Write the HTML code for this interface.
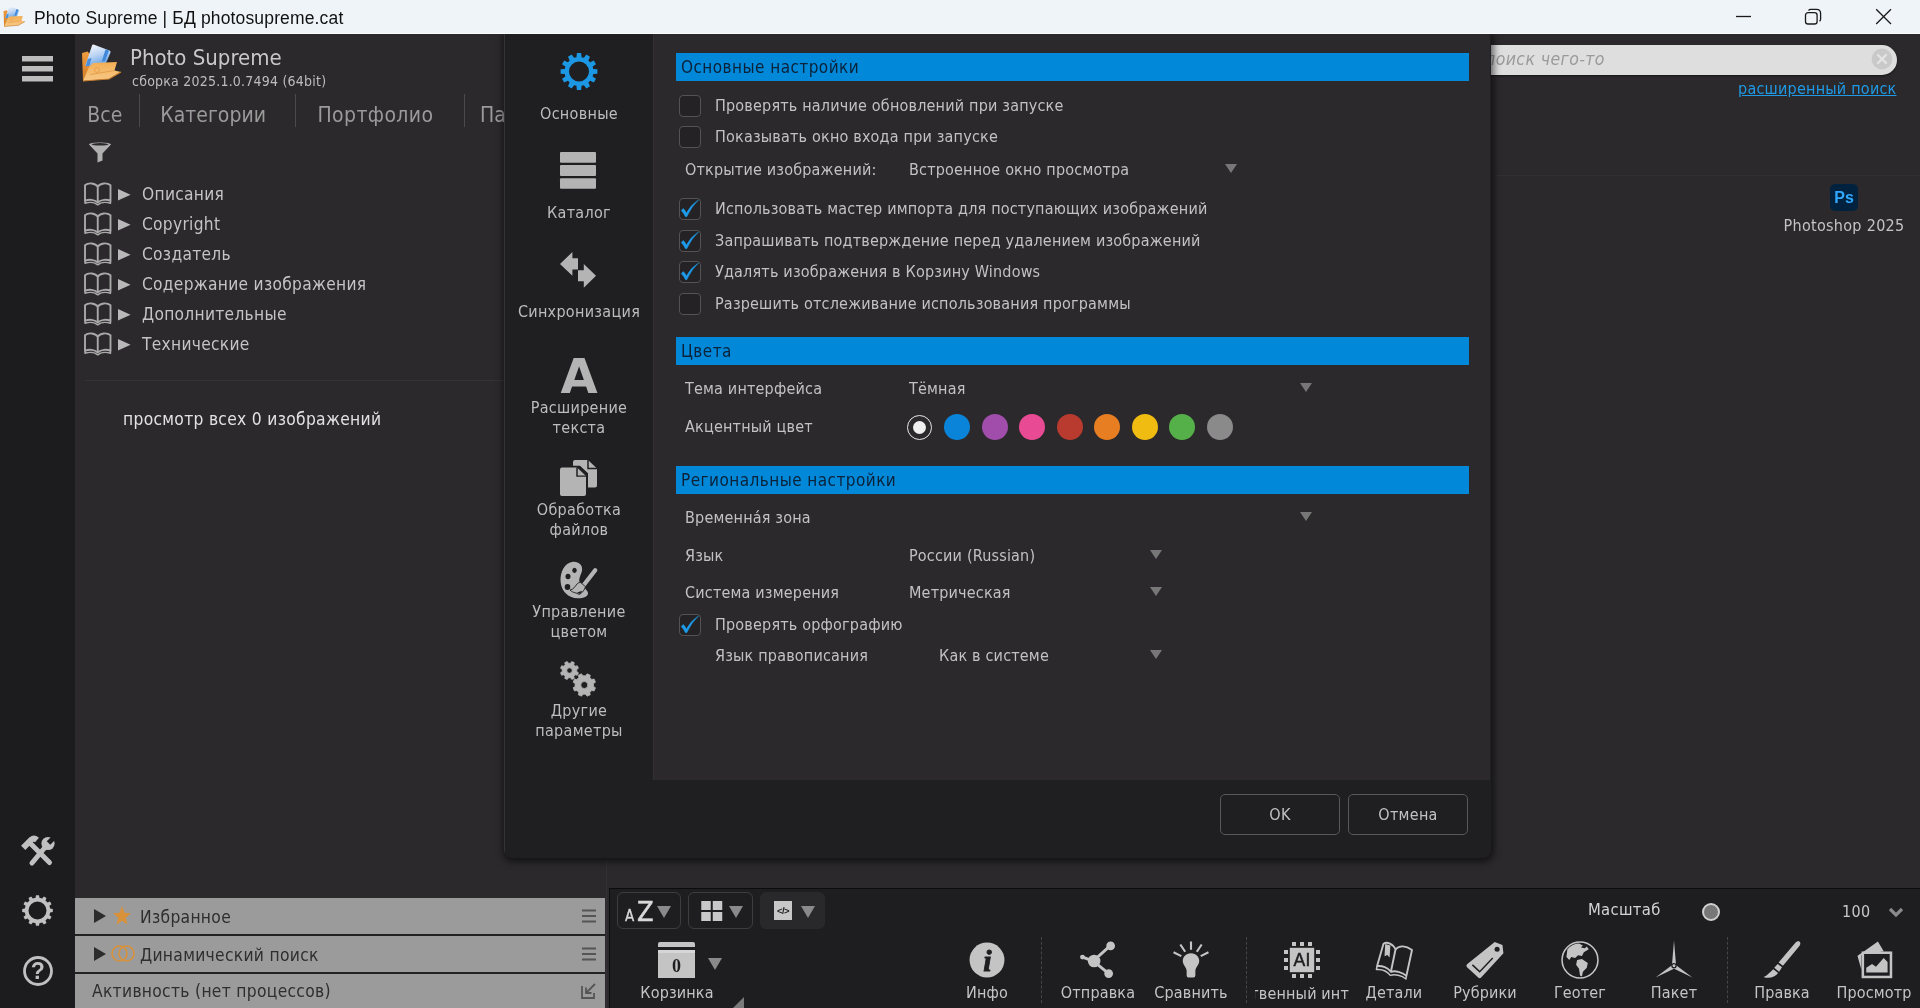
<!DOCTYPE html>
<html lang="ru">
<head>
<meta charset="utf-8">
<title>Photo Supreme | БД photosupreme.cat</title>
<style>
*{box-sizing:border-box;margin:0;padding:0}
html,body{width:1920px;height:1008px;overflow:hidden;background:#2b292b}
body{font-family:"DejaVu Sans Condensed","Liberation Sans",sans-serif;font-size:16px;color:#c4c4c4;letter-spacing:.25px;position:relative}
.abs{position:absolute}
#titlebar,#rail,#left,#right,#toolbar,#dlg{will-change:transform}
.t{position:absolute;white-space:nowrap;line-height:20px}
svg{position:absolute;overflow:visible}
/* title bar */
#titlebar{left:0;top:0;width:1920px;height:34px;background:#eff4f9;border-bottom:1px solid #fafcfe}
#titlebar .cap{left:34px;top:6.7px;font-family:"Liberation Sans",sans-serif;font-size:17.5px;color:#111;letter-spacing:.15px;line-height:22px}
/* rail */
#rail{left:0;top:34px;width:75px;height:974px;background:#1c1b1d}
/* left panel */
#left{left:75px;top:34px;width:530px;height:974px;background:#2b292b}
/* toolbar */
#toolbar{left:609px;top:888px;width:1311px;height:120px;background:#1e1d1f;border-top:1px solid #0c0c0c}
#gap{left:606px;top:858px;width:1px;height:150px;background:#323032}
/* dialog */
#dlg{left:504px;top:34px;width:986.5px;height:823.5px;background:#1f1e20;box-shadow:1px 2px 7px 2px rgba(0,0,0,.55);border-radius:0 0 8px 8px;overflow:hidden}
#dlgin{left:1px;top:0;width:985px;height:823px;box-shadow:-1px 0 0 0 #343234}
#dlgc{left:148px;top:0;width:837px;height:746px;background:#2b292b;border-left:1px solid #323032}
#dlgnav{left:0;top:0;width:148px;height:746px;background:#1f1e20}


#titlebar{z-index:50}
.logo{}
/* left panel content */
#left .h1{left:55px;top:10px;font-size:22px;line-height:28px;color:#c8c8c8;letter-spacing:0}
#left .h2{left:57px;top:37.5px;font-size:14px;line-height:18px;color:#bdbdbd;letter-spacing:.22px}
.tab{position:absolute;top:67px;font-size:21px;line-height:28px;color:#9a9a9a;white-space:nowrap;letter-spacing:0}
.tsep{position:absolute;top:60px;width:1px;height:33px;background:#4a4a4a}
.row{position:absolute;left:0;height:30px;width:430px}
.row .lbl{position:absolute;left:67px;top:6px;line-height:20px;font-size:17.2px;color:#c4c4c4;white-space:nowrap;letter-spacing:.3px}
.row .tri{position:absolute;left:43px;top:10.5px;width:0;height:0;border-left:12.5px solid #b6b6b6;border-top:5.8px solid transparent;border-bottom:5.8px solid transparent}
.bar{position:absolute;left:0;width:530px;height:36px;background:#9b9b9b;color:#2a2a2a}
.bar .lbl{position:absolute;top:9px;line-height:20px;font-size:17.3px;color:#2e2e2e;white-space:nowrap;letter-spacing:.3px}

/* dialog content */
.nl{position:absolute;left:0;margin-top:1px;width:148px;text-align:center;font-size:16px;line-height:20px;color:#bdbdbd;letter-spacing:.3px;white-space:nowrap}
.sh{position:absolute;left:171px;width:793px;height:27.5px;background:#0288d9;color:#0b2239;font-size:17px;line-height:29px;padding-left:5px;letter-spacing:.45px;white-space:nowrap}
.cb{position:absolute;left:174px;margin-top:.6px;width:22px;height:22px;border:1px solid #535353;border-radius:4px;background:#242224}
.cb svg{left:-1px;top:-2px}
.dl{position:absolute;font-size:16px;line-height:20px;color:#c2c2c2;white-space:nowrap;letter-spacing:.19px;margin-top:1px}
.dd{position:absolute;width:0;height:0;border-top:9px solid #777;border-left:6px solid transparent;border-right:6px solid transparent}
.dot{position:absolute;top:379.5px;width:26px;height:26px;border-radius:50%}
.btn{position:absolute;top:760px;width:120px;height:41px;border:1px solid #585858;border-radius:5px;text-align:center;line-height:39px;font-size:16px;color:#c2c2c2;letter-spacing:.3px}

.btn{z-index:2}
/* right */
#right{left:1490px;top:34px;width:430px;height:854px}
#search{left:-4px;top:11px;width:411px;height:30px;border-radius:0 16px 16px 0;background:#dedede;box-shadow:0 1px 2px rgba(0,0,0,.5)}
/* toolbar */
.tb{position:absolute;top:3px;height:37px;border-radius:6px;border:1px solid #3d3c3e}
.tl{position:absolute;top:94.3px;font-size:16px;line-height:20px;color:#c4c4c4;white-space:nowrap;letter-spacing:.15px;transform:translateX(-50%)}
.vsep{position:absolute;top:48px;width:0;height:66px;border-left:1.5px dashed #454446}
.dd2{position:absolute;width:0;height:0;border-top:12px solid #8a8a8a;border-left:7px solid transparent;border-right:7px solid transparent}
</style>
</head>
<body>
<div id="titlebar" class="abs">
  <div class="t cap">Photo Supreme | БД photosupreme.cat</div>
<svg style="left:3px;top:6px" width="22" height="21" viewBox="0 0 40 38">
    <defs><linearGradient id="tgf" x1="0" y1="0" x2="0" y2="1"><stop offset="0" stop-color="#f3ae55"/><stop offset="1" stop-color="#f7c987"/></linearGradient>
    <linearGradient id="tgb" x1=".2" y1="0" x2=".6" y2="1"><stop offset="0" stop-color="#f6f8fd"/><stop offset=".5" stop-color="#b9d3f3"/><stop offset="1" stop-color="#5b9de3"/></linearGradient>
    <linearGradient id="tgk" x1="0" y1="0" x2="0" y2="1"><stop offset="0" stop-color="#ef9a3d"/><stop offset="1" stop-color="#d07f2a"/></linearGradient></defs>
    <path d="M1 9L6.5 7.5L9 10L15 9L13 30L2 37Z" fill="url(#tgk)"/>
    <path d="M12.5 .5Q11.5 .3 11 1.5L4.5 21Q4.2 22.5 5.5 22.300L24 19.5Q25 19.3 25.5 18L29.5 8.5Q30 7 28.5 6.5Z" fill="url(#tgb)"/>
    <path d="M24.5 5.300L28 6.5L24 17L20.8 17.5Z" fill="#3f88da"/>
    <path d="M6.8 15L10.5 14L8.5 21.800L4.8 22.300Z" fill="#4a8fdc"/>
    <path d="M12 19L36 18L33.5 26.5L40 28L28 35L2 37L8 23Z" fill="url(#tgf)"/>
    <path d="M9.5 30.5L33.5 26.5" stroke="#e09a45" stroke-width=".8" fill="none"/>
    <path d="M2 37L28 35L40 28" fill="none" stroke="#c67c2b" stroke-width="1.2"/>
    <circle cx="16" cy="26" r="2.5" fill="none" stroke="#e39b48" stroke-width=".8"/>
  </svg>
  <svg style="left:1736px;top:9px" width="156" height="16" viewBox="0 0 156 16" fill="none" stroke="#1a1a1a" stroke-width="1.3"><path d="M0 7.5H15"/><rect x="69.5" y="3.7" width="11.6" height="11.3" rx="2.6"/><path d="M72.5 1.5Q73 .4 75 .4H80.5Q84.6 .4 84.6 4.5V10Q84.6 11.7 83.5 12.3"/><path d="M140.2 .2L155 15M155 .2L140.2 15"/></svg>
</div>
<div id="rail" class="abs">
  <svg style="left:22px;top:22px" width="31" height="26" viewBox="0 0 31 26" fill="#bcbcbc"><rect y="0" width="31" height="5.5"/><rect y="10" width="31" height="5.5"/><rect y="20" width="31" height="5.5"/></svg>
  <svg style="left:21px;top:802px" width="34" height="30" viewBox="0 0 34 30" fill="none" stroke="#c0c0c0"><path d="M11 27L23.5 12" stroke-width="5" stroke-linecap="round"/><circle cx="27" cy="7.5" r="6.6" fill="#c0c0c0" stroke="none"/><path d="M27.5 7L34 .5" stroke="#1c1b1d" stroke-width="5"/><path d="M10 8L28.5 26.5" stroke-width="5" stroke-linecap="round"/><path d="M2.2 11.800L10.5 3.5Q13 1.5 16 4" stroke-width="6"/></svg>
  <svg style="left:22px;top:861px" width="31" height="31" viewBox="0 0 31 31"><path d="M13.56 2.85L13.97 0.18L17.03 0.18L17.44 2.85L20.15 3.57L21.84 1.46L24.49 2.99L23.50 5.51L25.49 7.50L28.01 6.51L29.54 9.16L27.43 10.85L28.15 13.56L30.82 13.97L30.82 17.03L28.15 17.44L27.43 20.15L29.54 21.84L28.01 24.49L25.49 23.50L23.50 25.49L24.49 28.01L21.84 29.54L20.15 27.43L17.44 28.15L17.03 30.82L13.97 30.82L13.56 28.15L10.85 27.43L9.16 29.54L6.51 28.01L7.50 25.49L5.51 23.50L2.99 24.49L1.46 21.84L3.57 20.15L2.85 17.44L0.18 17.03L0.18 13.97L2.85 13.56L3.57 10.85L1.46 9.16L2.99 6.51L5.51 7.50L7.50 5.51L6.51 2.99L9.16 1.46L10.85 3.57ZM24.50 15.50A9 9 0 1 0 6.50 15.50A9 9 0 1 0 24.50 15.50Z" fill="#c0c0c0" fill-rule="evenodd"/></svg>
  <svg style="left:22.5px;top:921.5px" width="30" height="30" viewBox="0 0 30 30"><circle cx="15" cy="15" r="13.5" fill="none" stroke="#c0c0c0" stroke-width="2.8"/><text x="15" y="23.2" text-anchor="middle" font-family="Liberation Sans,sans-serif" font-weight="bold" font-size="23" fill="#c0c0c0">?</text></svg>
</div>
<div id="left" class="abs">
  <svg style="left:6px;top:10px" width="40" height="38" viewBox="0 0 40 38">
    <defs><linearGradient id="lgf" x1="0" y1="0" x2="0" y2="1"><stop offset="0" stop-color="#f3ae55"/><stop offset="1" stop-color="#f7c987"/></linearGradient>
    <linearGradient id="lgb" x1=".2" y1="0" x2=".6" y2="1"><stop offset="0" stop-color="#f6f8fd"/><stop offset=".5" stop-color="#b9d3f3"/><stop offset="1" stop-color="#5b9de3"/></linearGradient>
    <linearGradient id="lgk" x1="0" y1="0" x2="0" y2="1"><stop offset="0" stop-color="#ef9a3d"/><stop offset="1" stop-color="#d07f2a"/></linearGradient></defs>
    <path d="M1 9L6.5 7.5L9 10L15 9L13 30L2 37Z" fill="url(#lgk)"/>
    <path d="M12.5 .5Q11.5 .3 11 1.5L4.5 21Q4.2 22.5 5.5 22.300L24 19.5Q25 19.3 25.5 18L29.5 8.5Q30 7 28.5 6.5Z" fill="url(#lgb)"/>
    <path d="M24.5 5.300L28 6.5L24 17L20.8 17.5Z" fill="#3f88da"/>
    <path d="M6.8 15L10.5 14L8.5 21.800L4.8 22.300Z" fill="#4a8fdc"/>
    <path d="M12 19L36 18L33.5 26.5L40 28L28 35L2 37L8 23Z" fill="url(#lgf)"/>
    <path d="M9.5 30.5L33.5 26.5" stroke="#e09a45" stroke-width=".8" fill="none"/>
    <path d="M2 37L28 35L40 28" fill="none" stroke="#c67c2b" stroke-width="1.2"/>
    <circle cx="16" cy="26" r="2.5" fill="none" stroke="#e39b48" stroke-width=".8"/>
  </svg>
  <div class="t h1">Photo Supreme</div>
  <div class="t h2">сборка 2025.1.0.7494 (64bit)</div>
  <div class="tab" style="left:12.3px">Все</div><div class="tsep" style="left:64px"></div>
  <div class="tab" style="left:85.3px">Категории</div><div class="tsep" style="left:220px"></div>
  <div class="tab" style="left:242.5px;letter-spacing:.4px">Портфолио</div><div class="tsep" style="left:389px"></div>
  <div class="tab" style="left:405px">Па</div>
  <svg style="left:13px;top:107px" width="24" height="22" viewBox="0 0 24 22"><path d="M1 3.5C1 .8 23 .8 23 3.5L14.5 12.5V19.5L9.5 21.5V12.5Z" fill="#b0b0b0"/><ellipse cx="12" cy="3.3" rx="8.5" ry="1.3" fill="#2b292b"/></svg>
  <div class="row" style="top:144px"><svg class="bk" style="left:8.800px;top:4.300px" width="27.5" height="23.5" viewBox="0 0 27.5 23.5" fill="none" stroke="#a9a9a9" stroke-width="1.9" stroke-linejoin="round"><path d="M13.75 4.700C11.5 1 4.5 .3 1 3.200V18.800C5 17 10.5 17.4 13.75 20.600C17 17.4 22.5 17 26.5 18.800V3.200C23 .3 16 1 13.75 4.700ZM13.75 4.700V20.4"/><path d="M1 18.800V21.300C5 19.8 10.5 20.1 13.75 22.800C17 20.1 22.5 19.8 26.5 21.300V18.8" stroke-width="1.5"/></svg><svg style="left:43px;top:10.8px" width="13" height="12" viewBox="0 0 13 12"><path d="M0 0L12.6 5.75L0 11.5Z" fill="#b8b8b8"/></svg><span class="lbl">Описания</span></div>
<div class="row" style="top:174px"><svg class="bk" style="left:8.800px;top:4.300px" width="27.5" height="23.5" viewBox="0 0 27.5 23.5" fill="none" stroke="#a9a9a9" stroke-width="1.9" stroke-linejoin="round"><path d="M13.75 4.700C11.5 1 4.5 .3 1 3.200V18.800C5 17 10.5 17.4 13.75 20.600C17 17.4 22.5 17 26.5 18.800V3.200C23 .3 16 1 13.75 4.700ZM13.75 4.700V20.4"/><path d="M1 18.800V21.300C5 19.8 10.5 20.1 13.75 22.800C17 20.1 22.5 19.8 26.5 21.300V18.8" stroke-width="1.5"/></svg><svg style="left:43px;top:10.8px" width="13" height="12" viewBox="0 0 13 12"><path d="M0 0L12.6 5.75L0 11.5Z" fill="#b8b8b8"/></svg><span class="lbl">Copyright</span></div>
<div class="row" style="top:204px"><svg class="bk" style="left:8.800px;top:4.300px" width="27.5" height="23.5" viewBox="0 0 27.5 23.5" fill="none" stroke="#a9a9a9" stroke-width="1.9" stroke-linejoin="round"><path d="M13.75 4.700C11.5 1 4.5 .3 1 3.200V18.800C5 17 10.5 17.4 13.75 20.600C17 17.4 22.5 17 26.5 18.800V3.200C23 .3 16 1 13.75 4.700ZM13.75 4.700V20.4"/><path d="M1 18.800V21.300C5 19.8 10.5 20.1 13.75 22.800C17 20.1 22.5 19.8 26.5 21.300V18.8" stroke-width="1.5"/></svg><svg style="left:43px;top:10.8px" width="13" height="12" viewBox="0 0 13 12"><path d="M0 0L12.6 5.75L0 11.5Z" fill="#b8b8b8"/></svg><span class="lbl">Создатель</span></div>
<div class="row" style="top:234px"><svg class="bk" style="left:8.800px;top:4.300px" width="27.5" height="23.5" viewBox="0 0 27.5 23.5" fill="none" stroke="#a9a9a9" stroke-width="1.9" stroke-linejoin="round"><path d="M13.75 4.700C11.5 1 4.5 .3 1 3.200V18.800C5 17 10.5 17.4 13.75 20.600C17 17.4 22.5 17 26.5 18.800V3.200C23 .3 16 1 13.75 4.700ZM13.75 4.700V20.4"/><path d="M1 18.800V21.300C5 19.8 10.5 20.1 13.75 22.800C17 20.1 22.5 19.8 26.5 21.300V18.8" stroke-width="1.5"/></svg><svg style="left:43px;top:10.8px" width="13" height="12" viewBox="0 0 13 12"><path d="M0 0L12.6 5.75L0 11.5Z" fill="#b8b8b8"/></svg><span class="lbl">Содержание изображения</span></div>
<div class="row" style="top:264px"><svg class="bk" style="left:8.800px;top:4.300px" width="27.5" height="23.5" viewBox="0 0 27.5 23.5" fill="none" stroke="#a9a9a9" stroke-width="1.9" stroke-linejoin="round"><path d="M13.75 4.700C11.5 1 4.5 .3 1 3.200V18.800C5 17 10.5 17.4 13.75 20.600C17 17.4 22.5 17 26.5 18.800V3.200C23 .3 16 1 13.75 4.700ZM13.75 4.700V20.4"/><path d="M1 18.800V21.300C5 19.8 10.5 20.1 13.75 22.800C17 20.1 22.5 19.8 26.5 21.300V18.8" stroke-width="1.5"/></svg><svg style="left:43px;top:10.8px" width="13" height="12" viewBox="0 0 13 12"><path d="M0 0L12.6 5.75L0 11.5Z" fill="#b8b8b8"/></svg><span class="lbl">Дополнительные</span></div>
<div class="row" style="top:294px"><svg class="bk" style="left:8.800px;top:4.300px" width="27.5" height="23.5" viewBox="0 0 27.5 23.5" fill="none" stroke="#a9a9a9" stroke-width="1.9" stroke-linejoin="round"><path d="M13.75 4.700C11.5 1 4.5 .3 1 3.200V18.800C5 17 10.5 17.4 13.75 20.600C17 17.4 22.5 17 26.5 18.800V3.200C23 .3 16 1 13.75 4.700ZM13.75 4.700V20.4"/><path d="M1 18.800V21.300C5 19.8 10.5 20.1 13.75 22.800C17 20.1 22.5 19.8 26.5 21.300V18.8" stroke-width="1.5"/></svg><svg style="left:43px;top:10.8px" width="13" height="12" viewBox="0 0 13 12"><path d="M0 0L12.6 5.75L0 11.5Z" fill="#b8b8b8"/></svg><span class="lbl">Технические</span></div>

  <div class="abs" style="left:10px;top:346px;width:520px;height:1px;background:#353335"></div>
  <div class="t" style="left:48px;top:375px;font-size:17.3px;color:#e2e2e2;letter-spacing:.3px">просмотр всех 0 изображений</div>
  <div class="bar" style="top:864px"><span class="abs" style="left:19px;top:11px;width:0;height:0;border-left:12px solid #2c2c2c;border-top:7px solid transparent;border-bottom:7px solid transparent"></span>
    <svg style="left:37.5px;top:7.5px" width="18" height="19" viewBox="0 0 21 20" preserveAspectRatio="none"><path d="M10.5 0L13.3 7L20.8 7.5L15 12.300L16.9 19.600L10.5 15.5L4.1 19.600L6 12.300L.2 7.5L7.7 7Z" fill="#d9923a"/></svg>
    <span class="lbl" style="left:65px">Избранное</span>
    <svg style="left:507px;top:11px" width="14" height="14" viewBox="0 0 14 14"><path d="M0 1.5H14M0 7H14M0 12.5H14" stroke="#555" stroke-width="2"/></svg></div>
  <div class="bar" style="top:902px"><span class="abs" style="left:19px;top:11px;width:0;height:0;border-left:12px solid #2c2c2c;border-top:7px solid transparent;border-bottom:7px solid transparent"></span>
    <svg style="left:36px;top:9px" width="24" height="17" viewBox="0 0 24 17" fill="none" stroke="#d9923a" stroke-width="1.6"><circle cx="8.5" cy="8.5" r="7.5"/><circle cx="15.5" cy="8.5" r="7.5"/></svg>
    <span class="lbl" style="left:65px">Динамический поиск</span>
    <svg style="left:507px;top:11px" width="14" height="14" viewBox="0 0 14 14"><path d="M0 1.5H14M0 7H14M0 12.5H14" stroke="#555" stroke-width="2"/></svg></div>
  <div class="bar" style="top:940px;height:34px"><span class="lbl" style="left:17px;top:7px">Активность (нет процессов)</span>
    <svg style="left:506px;top:9px" width="16" height="16" viewBox="0 0 16 16" fill="none" stroke="#555" stroke-width="1.8"><path d="M1 3V15H13V10"/><path d="M14 1L6 9M5 4.5V10H10.5"/></svg></div>
  <div class="abs" style="left:0;top:900px;width:530px;height:2px;background:#222"></div>
  <div class="abs" style="left:0;top:938px;width:530px;height:2px;background:#222"></div>
</div>
<div id="right" class="abs">
  <div id="search" class="abs"><div class="t" style="left:-1px;top:4px;font-style:italic;font-size:17.5px;color:#9a9a9a;letter-spacing:.4px">поиск чего-то</div>
    <svg style="left:384px;top:2px" width="24" height="24" viewBox="0 0 24 24"><circle cx="12" cy="12" r="10.4" fill="#c9c9c9"/><path d="M8 8L16 16M16 8L8 16" stroke="#e4e4e4" stroke-width="2.3" stroke-linecap="round"/></svg></div>
  <div class="t" style="right:23.5px;top:45px;font-size:16px;color:#1f9ae6;text-decoration:underline;letter-spacing:.22px">расширенный поиск</div>
  <div class="abs" style="left:6px;top:141px;width:424px;height:1px;background:#323032"></div>
  <div class="abs" style="left:340px;top:149.6px;width:28px;height:27px;border-radius:5px;background:#00223f;color:#31a8ff;font-family:'Liberation Sans',sans-serif;font-weight:bold;font-size:16px;line-height:27px;text-align:center;letter-spacing:0">Ps</div>
  <div class="t" style="left:354px;top:181.5px;transform:translateX(-50%);font-size:16px;color:#c4c4c4;letter-spacing:.3px">Photoshop 2025</div>
</div>
<div id="gap" class="abs"></div>
<div id="toolbar" class="abs">
<div class="abs" style="left:0;top:0;width:1px;height:120px;background:#0e0e0e"></div>
<div class="tb" style="left:8px;width:64px"><span class="abs" style="left:7px;top:14px;font-size:15px;line-height:18px;color:#d8d8d8;letter-spacing:0;-webkit-text-stroke:.3px #d8d8d8">A</span><span class="abs" style="left:19px;top:1px;font-size:27px;line-height:36px;color:#d8d8d8;letter-spacing:0;-webkit-text-stroke:.5px #d8d8d8">Z</span><span class="dd2" style="left:39px;top:13px"></span></div>
<div class="tb" style="left:79px;width:65px"><svg style="left:11.5px;top:8px" width="21.5" height="20" viewBox="0 0 21 20" fill="#c8c8c8"><rect width="9.5" height="9"/><rect x="11.5" width="9.5" height="9"/><rect y="11" width="9.5" height="9"/><rect x="11.5" y="11" width="9.5" height="9"/></svg><span class="dd2" style="left:40px;top:13px"></span></div>
<div class="tb" style="left:151px;width:65px;border-color:#29282a;background:#29282a"><div class="abs" style="left:13px;top:8px;width:18px;height:19px;background:#c8c8c8;color:#222;font-family:'Liberation Sans',sans-serif;font-weight:bold;font-size:9.5px;line-height:19px;text-align:center;letter-spacing:-.5px">&lt;/&gt;</div><span class="dd2" style="left:40px;top:13px"></span></div>
<div class="abs" style="left:49px;top:53px;width:37px;height:5px;border-radius:2px 2px 0 0;background:#c4c4c4"></div>
<div class="abs" style="left:49px;top:61px;width:37px;height:28px;background:#c4c4c4;border-top:3px solid #d6d6d6;color:#1e1d1f;font-family:'Liberation Serif',serif;font-weight:bold;font-size:18px;line-height:26px;text-align:center;letter-spacing:0">0</div>
<span class="dd2" style="left:99px;top:69px"></span>
<div class="tl" style="left:68px">Корзинка</div>
<div class="abs" style="left:124px;top:108px;width:0;height:0;border-bottom:11px solid #7a7a7a;border-left:11px solid transparent"></div>
<div class="abs" style="left:358px;top:51px;width:40px;height:40px;transform:scale(.97)"><svg width="40" height="40" viewBox="0 0 40 40"><circle cx="20" cy="20" r="18" fill="#c4c4c4"/><text x="20.5" y="31" text-anchor="middle" font-family="Liberation Serif,serif" font-style="italic" font-weight="bold" font-size="31" fill="#1e1d1f" stroke="#1e1d1f" stroke-width=".9">i</text></svg></div><div class="tl" style="left:378px">Инфо</div>
<div class="vsep" style="left:432px"></div>
<div class="abs" style="left:469px;top:51px;width:40px;height:40px;transform:scale(.97)"><svg width="40" height="40" viewBox="0 0 40 40" fill="#c4c4c4" stroke="#c4c4c4"><path d="M4 17L15 21L33 5M15 21L31 34" fill="none" stroke-width="3"/><circle cx="16" cy="21" r="6.5" stroke="none"/><circle cx="33" cy="5.5" r="4.5" stroke="none"/><circle cx="31" cy="34" r="4.5" stroke="none"/><circle cx="4" cy="17" r="2.5" stroke="none"/></svg></div><div class="tl" style="left:489px">Отправка</div>
<div class="abs" style="left:562px;top:51px;width:40px;height:40px;transform:scale(.97)"><svg width="40" height="40" viewBox="0 0 40 40" fill="#c4c4c4"><path d="M20 13C14.5 13 11.5 17 11.5 21C11.5 25 15 27 15.5 31V36Q15.5 38 17.5 38H22.5Q24.5 38 24.5 36V31C25 27 28.5 25 28.5 21C28.5 17 25.5 13 20 13Z"/><path d="M20 1V9.5M9 4L14 11.5M31 4L26 11.5M2 12L10 16M38 12L30 16" stroke="#c4c4c4" stroke-width="2.2" fill="none"/></svg></div><div class="tl" style="left:582px">Сравнить</div>
<div class="vsep" style="left:637px"></div>
<div class="abs" style="left:672px;top:51.5px;width:40px;height:40px"><svg style="left:3px;top:1px" width="36" height="36" viewBox="0 0 36 36" fill="#c4c4c4"><rect x="8" y="0" width="4" height="4"/><rect x="8" y="32" width="4" height="4"/><rect x="0" y="8" width="4" height="4"/><rect x="32" y="8" width="4" height="4"/><rect x="16" y="0" width="4" height="4"/><rect x="16" y="32" width="4" height="4"/><rect x="0" y="16" width="4" height="4"/><rect x="32" y="16" width="4" height="4"/><rect x="24" y="0" width="4" height="4"/><rect x="24" y="32" width="4" height="4"/><rect x="0" y="24" width="4" height="4"/><rect x="32" y="24" width="4" height="4"/><rect x="5.8" y="5.8" width="24.4" height="24.4"/><text x="18" y="24.3" text-anchor="middle" font-family="Liberation Sans,sans-serif" font-size="17.5" fill="#1e1d1f" stroke="#1e1d1f" stroke-width=".5">AI</text></svg></div><div class="abs" style="left:646px;top:95px;width:93.5px;height:22px;overflow:hidden"><div class="tl" id="ailbl" style="top:0;left:0;transform:translateX(-57.3px)">Искусственный интеллект</div></div>
<div class="abs" style="left:765px;top:51.5px;width:40px;height:40px"><svg style="left:1.5px;top:1.5px" width="38" height="38" viewBox="0 0 38 38" fill="none" stroke="#c4c4c4" stroke-width="1.9" stroke-linejoin="round"><path d="M7.5 1.700C11 -.5 17 1.5 19.5 7.5L14.9 29.800C12 25.5 6 23.5 1.1 24.100Z"/><path d="M19.5 7.5C23 3 30 3.5 36 8L30.4 33.800C26 30 19 28.5 14.9 29.8"/><path d="M1.1 24.100L.4 27.5C5.5 27 11 29 14.3 33.400C19 32 25.5 33.2 30 37L30.4 33.8" stroke-width="1.5"/><path d="M9.2 2L14.4 3.600L13.6 15.5L11.3 13L8.5 14.200Z" fill="#c4c4c4" stroke="none"/></svg></div><div class="tl" style="left:785px">Детали</div>
<div class="abs" style="left:856px;top:51px;width:40px;height:40px;transform:scale(.97)"><svg width="40" height="40" viewBox="0 0 40 40"><path d="M30 1.5L38 4.5L39 13L16 38Q14.5 39.5 13 38L1.5 27.5Q0 26 1.5 24.5Z" fill="#c4c4c4"/><circle cx="32.5" cy="9" r="2.6" fill="#1e1d1f"/><path d="M7 25L14.5 32L28 18" fill="none" stroke="#1e1d1f" stroke-width="1.5"/></svg></div><div class="tl" style="left:876px">Рубрики</div>
<div class="abs" style="left:951px;top:51px;width:40px;height:40px;transform:scale(.97)"><svg width="40" height="40" viewBox="0 0 40 40"><circle cx="20" cy="20" r="18.5" fill="none" stroke="#c4c4c4" stroke-width="1.6"/><path d="M7 9C10 5 15 3 19 3L23 5L21 7L25 8L27 6L29 9L24 12L22 16L18 15L15 18L11 17L9 20L6 17Z" fill="#c4c4c4"/><path d="M17 20L22 19L28 23L27 28L23 32L22 37L20 36L19 29L16 25Z" fill="#c4c4c4"/></svg></div><div class="tl" style="left:971px">Геотег</div>
<div class="abs" style="left:1045px;top:51px;width:40px;height:40px;transform:scale(.97)"><svg width="40" height="40" viewBox="0 0 40 40" fill="#c4c4c4"><path d="M20 0L22 24H18Z"/><path d="M1 38L18.5 25L21 28.5Z"/><path d="M39 38L21.5 25L19 28.5Z"/><circle cx="20" cy="26" r="2.8" fill="#1e1d1f"/><circle cx="20" cy="26" r="1.5"/></svg></div><div class="tl" style="left:1065px">Пакет</div>
<div class="vsep" style="left:1118px"></div>
<div class="abs" style="left:1153px;top:51px;width:40px;height:40px;transform:scale(.97)"><svg width="40" height="40" viewBox="0 0 40 40" fill="#c4c4c4"><path d="M38 1C39.5 2 39 4 38 5.5L21 26L16.5 22.5L34 2C35.5 .5 37 .3 38 1Z"/><path d="M15.5 24L20 27.5L17 32L12 28Z"/><path d="M11 29.5L16 33.5C13 38 6 39.5 1 37.5C5 36 7 33 11 29.5Z"/></svg></div><div class="tl" style="left:1173px">Правка</div>
<div class="abs" style="left:1245px;top:51px;width:40px;height:40px;transform:scale(.97)"><svg width="40" height="40" viewBox="0 0 40 40"><path d="M3 16L24 1L30 11" fill="#c4c4c4"/><path d="M3 16L7 30V13Z" fill="#c4c4c4"/><rect x="8.5" y="12.5" width="29" height="25" fill="#1e1d1f" stroke="#c4c4c4" stroke-width="2.6"/><path d="M12 33V28L18 24L22 27L30 18L34 22V33Z" fill="#c4c4c4"/></svg></div><div class="tl" style="left:1265px">Просмотр</div>
<div class="t" style="left:979px;top:11px;font-size:16.5px;color:#d4d4d4;letter-spacing:.3px">Масштаб</div>
<div class="abs" style="left:1093px;top:14px;width:18px;height:18px;border-radius:50%;background:#777;border:2.2px solid #cfcfcf"></div>
<div class="t" style="left:1233px;top:13px;font-size:16px;color:#c8c8c8;letter-spacing:.3px">100</div>
<svg style="left:1279px;top:18px" width="16" height="11" viewBox="0 0 16 11"><path d="M2 2L8 8L14 2" fill="none" stroke="#8a8a8a" stroke-width="3.2"/></svg>
</div>
<div id="dlg" class="abs"><div id="dlgin" class="abs">
  <div id="dlgc" class="abs"></div>
  <div id="dlgnav" class="abs">
<svg style="left:54px;top:18px" width="40" height="40" viewBox="0 0 40 40"><path d="M17.43 5.23L17.87 1.12L22.13 1.12L22.57 5.23L24.91 5.86L27.35 2.52L31.03 4.65L29.36 8.42L31.08 10.14L34.85 8.47L36.98 12.15L33.64 14.59L34.27 16.93L38.38 17.37L38.38 21.63L34.27 22.07L33.64 24.41L36.98 26.85L34.85 30.53L31.08 28.86L29.36 30.58L31.03 34.35L27.35 36.48L24.91 33.14L22.57 33.77L22.13 37.88L17.87 37.88L17.43 33.77L15.09 33.14L12.65 36.48L8.97 34.35L10.64 30.58L8.92 28.86L5.15 30.53L3.02 26.85L6.36 24.41L5.73 22.07L1.62 21.63L1.62 17.37L5.73 16.93L6.36 14.59L3.02 12.15L5.15 8.47L8.92 10.14L10.64 8.42L8.97 4.65L12.65 2.52L15.09 5.86ZM30.00 19.50A10 10 0 1 0 10.00 19.50A10 10 0 1 0 30.00 19.50Z" fill="#1c97e3" fill-rule="evenodd"/></svg>
<div class="nl" style="top:69px">Основные</div>
<svg style="left:55px;top:118px" width="36" height="37" viewBox="0 0 36 37" fill="#b4b4b4"><rect x="0" y="0" width="36" height="10.8" rx="1"/><rect x="0" y="13.1" width="36" height="10.8" rx="1"/><rect x="0" y="26.2" width="36" height="10.5" rx="1"/></svg>
<div class="nl" style="top:168px">Каталог</div>
<svg style="left:55px;top:218px" width="36" height="36" viewBox="0 0 36 36" fill="#b4b4b4"><path d="M0 11.900L12.4 0V6.300H18V17.5H12.400V23.800Z"/><path d="M36 23.800L23.8 11.900V18.200H18V29.300H23.800V35.700Z"/></svg>
<div class="nl" style="top:267px">Синхронизация</div>
<div class="abs" style="left:0;top:317px;width:148px;text-align:center;font-family:'DejaVu Sans','Liberation Sans',sans-serif;font-weight:bold;font-size:48px;line-height:50px;color:#b4b4b4;letter-spacing:0">A</div>
<div class="nl" style="top:363px">Расширение</div>
<div class="nl" style="top:383px">текста</div>
<svg style="left:55px;top:426px" width="38" height="36" viewBox="0 0 38 38" preserveAspectRatio="none" fill="#b4b4b4"><path d="M13 0H28L37 9V27Q37 29 35 29H28V14L20 6H13V2Q13 0 15 0Z"/><path d="M28 0V9H37" fill="none" stroke="#1f1e20" stroke-width="1.5"/><path d="M2 8H17L26 17V36Q26 38 24 38H2Q0 38 0 36V10Q0 8 2 8Z"/><path d="M17 8V17H26" fill="none" stroke="#1f1e20" stroke-width="1.5"/></svg>
<div class="nl" style="top:465px">Обработка</div>
<div class="nl" style="top:485px">файлов</div>
<svg style="left:55px;top:527px" width="38" height="38" viewBox="0 0 38 38"><path d="M13 .8C18.5 .3 23 4 22 9.5C21.3 13.5 18.5 17 19.5 21C20.5 25 27.5 28 28 32C28.3 35.5 23 37.5 17.5 37.300C9 37 1.5 31 .6 21C-.2 11 5 1.5 13 .8Z" fill="#b4b4b4"/><ellipse cx="14.5" cy="9.3" rx="2.2" ry="2.6" fill="#1f1e20"/><ellipse cx="8" cy="15.5" rx="2.5" ry="2.7" fill="#1f1e20"/><ellipse cx="7.5" cy="26" rx="2.8" ry="2.9" fill="#1f1e20"/><path d="M35.2 9.200L23 25" stroke="#1f1e20" stroke-width="6.2" stroke-linecap="round"/><path d="M35.2 9.200L23 25" stroke="#b4b4b4" stroke-width="4.3" stroke-linecap="round"/><path d="M20.8 21.600L25.5 25.800C24.5 29 22.5 31.5 19.5 33.5L16 32C13.5 31.5 11.5 30.5 10 29C13.5 28.5 15 25.5 17 23C18 21.8 19.5 21.3 20.8 21.600Z" fill="#b4b4b4" stroke="#1f1e20" stroke-width=".9"/><path d="M17 31.5L20 33L22.5 29.800Z" fill="#1f1e20"/></svg>
<div class="nl" style="top:567px">Управление</div>
<div class="nl" style="top:587px">цветом</div>
<svg style="left:55px;top:626px" width="38" height="38" viewBox="0 0 38 38"><path d="M10.59 3.28L11.72 1.57L14.25 2.62L13.84 4.63L15.37 6.16L17.38 5.75L18.43 8.28L16.72 9.41L16.72 11.59L18.43 12.72L17.38 15.25L15.37 14.84L13.84 16.37L14.25 18.38L11.72 19.43L10.59 17.72L8.41 17.72L7.28 19.43L4.75 18.38L5.16 16.37L3.63 14.84L1.62 15.25L0.57 12.72L2.28 11.59L2.28 9.41L0.57 8.28L1.62 5.75L3.63 6.16L5.16 4.63L4.75 2.62L7.28 1.57L8.41 3.28ZM12.20 10.50A2.7 2.7 0 1 0 6.80 10.50A2.7 2.7 0 1 0 12.20 10.50Z" fill="#b4b4b4" fill-rule="evenodd" stroke="#b4b4b4" stroke-width=".8" stroke-linejoin="round"/><path d="M25.68 15.80L27.07 13.84L30.23 15.15L29.83 17.52L31.78 19.47L34.15 19.07L35.46 22.23L33.50 23.62L33.50 26.38L35.46 27.77L34.15 30.93L31.78 30.53L29.83 32.48L30.23 34.85L27.07 36.16L25.68 34.20L22.92 34.20L21.53 36.16L18.37 34.85L18.77 32.48L16.82 30.53L14.45 30.93L13.14 27.77L15.10 26.38L15.10 23.62L13.14 22.23L14.45 19.07L16.82 19.47L18.77 17.52L18.37 15.15L21.53 13.84L22.92 15.80ZM27.80 25.00A3.5 3.5 0 1 0 20.80 25.00A3.5 3.5 0 1 0 27.80 25.00Z" fill="#b4b4b4" fill-rule="evenodd" stroke="#b4b4b4" stroke-width=".8" stroke-linejoin="round"/></svg>
<div class="nl" style="top:666px">Другие</div>
<div class="nl" style="top:686px">параметры</div>
</div>
<div class="sh" style="top:19px">Основные настройки</div>
<div class="cb" style="top:60px"></div><div class="dl" style="left:210px;top:61px">Проверять наличие обновлений при запуске</div>
<div class="cb" style="top:91px"></div><div class="dl" style="left:210px;top:92px">Показывать окно входа при запуске</div>
<div class="dl" style="left:180px;top:125px">Открытие изображений:</div>
<div class="dl" style="left:404px;top:125px">Встроенное окно просмотра</div>
<div class="dd" style="left:720px;top:130px"></div>
<div class="cb" style="top:163px"><svg width="22" height="22" viewBox="0 0 22 22"><path d="M2.2 13.4L4.4 11.6Q6.4 13.8 7.4 16Q11.5 8 19.5 2.9Q12.3 9.8 7.8 19.7H6.5Q4.8 16 2.2 13.4Z" fill="#1d9bea" stroke="#1d9bea" stroke-width=".5" stroke-linejoin="round"/></svg></div><div class="dl" style="left:210px;top:164px">Использовать мастер импорта для поступающих изображений</div>
<div class="cb" style="top:195px"><svg width="22" height="22" viewBox="0 0 22 22"><path d="M2.2 13.4L4.4 11.6Q6.4 13.8 7.4 16Q11.5 8 19.5 2.9Q12.3 9.8 7.8 19.7H6.5Q4.8 16 2.2 13.4Z" fill="#1d9bea" stroke="#1d9bea" stroke-width=".5" stroke-linejoin="round"/></svg></div><div class="dl" style="left:210px;top:196px">Запрашивать подтверждение перед удалением изображений</div>
<div class="cb" style="top:226px"><svg width="22" height="22" viewBox="0 0 22 22"><path d="M2.2 13.4L4.4 11.6Q6.4 13.8 7.4 16Q11.5 8 19.5 2.9Q12.3 9.8 7.8 19.7H6.5Q4.8 16 2.2 13.4Z" fill="#1d9bea" stroke="#1d9bea" stroke-width=".5" stroke-linejoin="round"/></svg></div><div class="dl" style="left:210px;top:227px">Удалять изображения в Корзину Windows</div>
<div class="cb" style="top:258px"></div><div class="dl" style="left:210px;top:259px">Разрешить отслеживание использования программы</div>
<div class="sh" style="top:303px">Цвета</div>
<div class="dl" style="left:180px;top:344px">Тема интерфейса</div>
<div class="dl" style="left:404px;top:344px">Тёмная</div>
<div class="dd" style="left:795px;top:349px"></div>
<div class="dl" style="left:180px;top:382px">Акцентный цвет</div>
<div class="dot" style="left:402px;top:380.5px;width:25px;height:25px;border:1.5px solid #e8e8e8"></div><div class="dot" style="left:408px;top:386.5px;width:13px;height:13px;background:#f0f0f0"></div>
<div class="dot" style="left:439px;background:#0a84d8"></div><div class="dot" style="left:476.5px;background:#a04dab"></div><div class="dot" style="left:514px;background:#e84a94"></div><div class="dot" style="left:551.5px;background:#b93a2e"></div><div class="dot" style="left:589px;background:#e87e22"></div><div class="dot" style="left:626.5px;background:#f0bc12"></div><div class="dot" style="left:664px;background:#56b04a"></div><div class="dot" style="left:701.5px;background:#8a8a8a"></div>
<div class="sh" style="top:432px">Региональные настройки</div>
<div class="dl" style="left:180px;top:473px">Временна́я зона</div>
<div class="dd" style="left:795px;top:478px"></div>
<div class="dl" style="left:180px;top:511px">Язык</div>
<div class="dl" style="left:404px;top:511px">России (Russian)</div>
<div class="dd" style="left:645px;top:516px"></div>
<div class="dl" style="left:180px;top:548px">Система измерения</div>
<div class="dl" style="left:404px;top:548px">Метрическая</div>
<div class="dd" style="left:645px;top:553px"></div>
<div class="cb" style="top:579px"><svg width="22" height="22" viewBox="0 0 22 22"><path d="M2.2 13.4L4.4 11.6Q6.4 13.8 7.4 16Q11.5 8 19.5 2.9Q12.3 9.8 7.8 19.7H6.5Q4.8 16 2.2 13.4Z" fill="#1d9bea" stroke="#1d9bea" stroke-width=".5" stroke-linejoin="round"/></svg></div><div class="dl" style="left:210px;top:580px">Проверять орфографию</div>
<div class="dl" style="left:210px;top:611px">Язык правописания</div>
<div class="dl" style="left:434px;top:611px">Как в системе</div>
<div class="dd" style="left:645px;top:616px"></div>
<div class="btn" style="left:715px">OK</div><div class="btn" style="left:843px">Отмена</div>

</div></div>
</body>
</html>
